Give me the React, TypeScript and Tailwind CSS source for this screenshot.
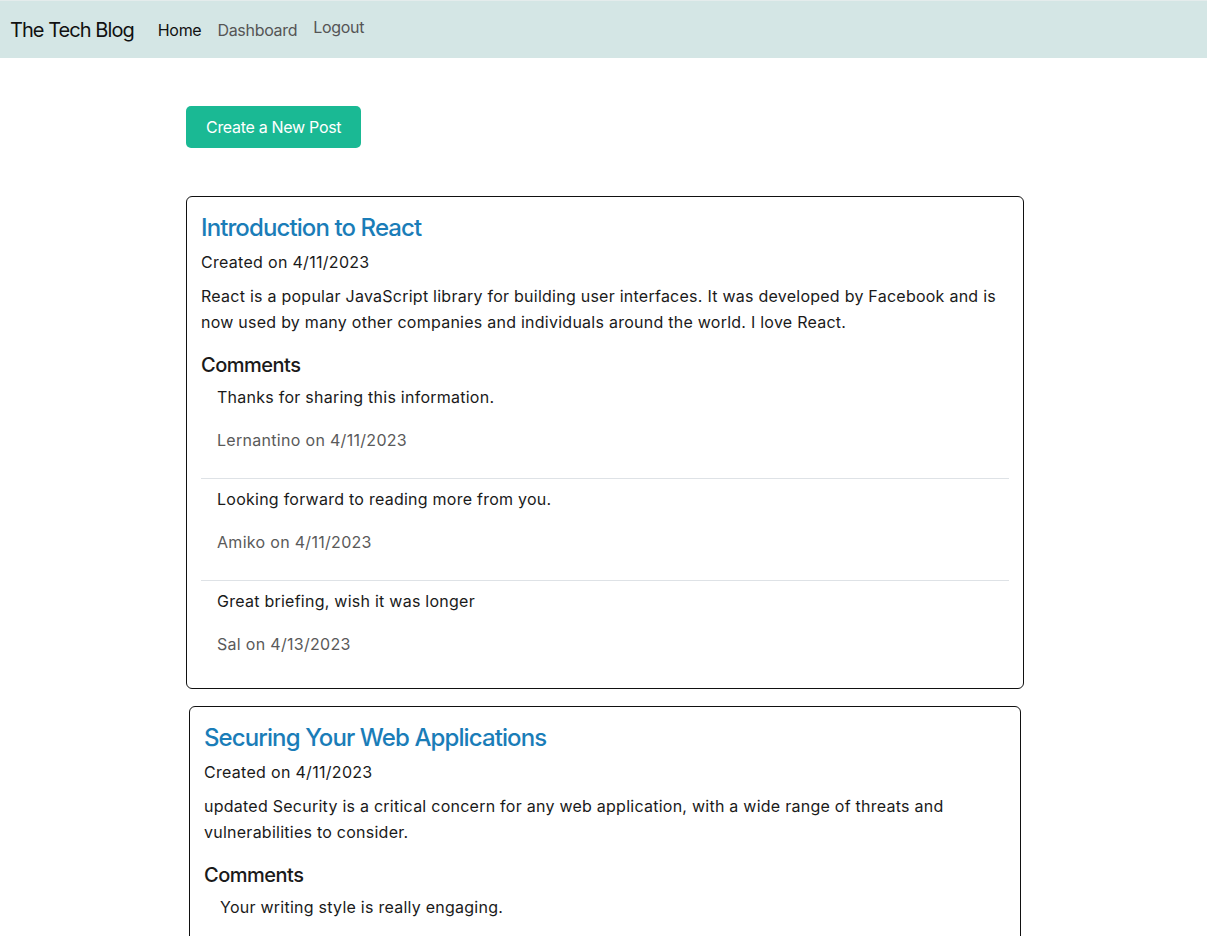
type Comment = { text: string; author: string; date: string }
type Post = { title: string; date: string; body: string; comments: Comment[] }

const posts: Post[] = [
  {
    title: 'Introduction to React',
    date: '4/11/2023',
    body: 'React is a popular JavaScript library for building user interfaces. It was developed by Facebook and is now used by many other companies and individuals around the world. I love React.',
    comments: [
      { text: 'Thanks for sharing this information.', author: 'Lernantino', date: '4/11/2023' },
      { text: 'Looking forward to reading more from you.', author: 'Amiko', date: '4/11/2023' },
      { text: 'Great briefing, wish it was longer', author: 'Sal', date: '4/13/2023' },
    ],
  },
  {
    title: 'Securing Your Web Applications',
    date: '4/11/2023',
    body: 'updated Security is a critical concern for any web application, with a wide range of threats and vulnerabilities to consider.',
    comments: [
      { text: 'Your writing style is really engaging.', author: 'Lernantino', date: '4/11/2023' },
    ],
  },
]

function PostCard({ post, className }: { post: Post; className?: string }) {
  return (
    <div className={`border border-[#111] rounded-[6px] pt-4 px-[14px] pb-[6px] ${className ?? ''}`}>
      <h2 className="text-[24px] leading-[29px] font-medium tracking-[-0.9px] text-[#1a7db8]">{post.title}</h2>
      <p className="mt-2 leading-6 tracking-[0.3px]">Created on {post.date}</p>
      <p className="mt-[9px] leading-[26px] tracking-[0.25px]">{post.body}</p>
      <h3 className="mt-[18px] text-[20px] leading-6 font-medium tracking-[-0.5px]">Comments</h3>
      <div className="mt-2">
        {post.comments.map((c, i) => (
          <div
            key={i}
            className={`pl-4 pb-[26px] ${i > 0 ? 'pt-2' : ''} ${i < post.comments.length - 1 ? 'border-b border-[#dee2e6]' : ''}`}
          >
            <p className="leading-6 tracking-[0.25px]">{c.text}</p>
            <p className="mt-[19px] leading-6 tracking-[0.3px] text-[#5a5a5a]">
              {c.author} on {c.date}
            </p>
          </div>
        ))}
      </div>
    </div>
  )
}

export default function App() {
  return (
    <div className="min-h-screen bg-white text-[#1a1a1a] text-[16px]" style={{ fontFamily: 'Inter, "Noto Sans", sans-serif' }}>
      <nav className="h-[58px] bg-[#d4e6e5] border-t border-[#e4ecec] flex items-center pl-[10px]">
        <span className="text-[20px] tracking-[-0.95px] text-[#111] mr-[24px]">The Tech Blog</span>
        <div className="flex items-center gap-4 tracking-[-0.3px]">
          <a className="text-[#111]">Home</a>
          <a className="text-[#555]">Dashboard</a>
          <a className="text-[#555] mb-[6px]">Logout</a>
        </div>
      </nav>

      <main className="ml-[186px] w-[838px] pb-10">
        <button className="mt-[48px] h-[42px] px-5 rounded-[5px] bg-[#1ab994] text-white tracking-[-0.3px]">
          Create a New Post
        </button>
        <PostCard post={posts[0]} className="mt-[48px]" />
        <PostCard post={posts[1]} className="mt-[17px] mx-[3px]" />
      </main>
    </div>
  )
}
